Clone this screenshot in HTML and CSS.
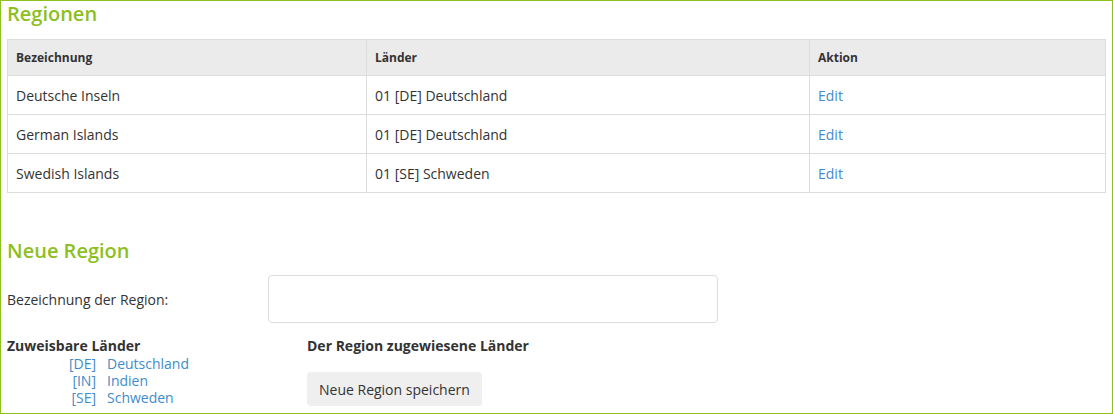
FILE: index.html
```html
<!DOCTYPE html>
<html lang="de">
<head>
<meta charset="utf-8">
<title>Regionen</title>
<link rel="stylesheet" href="styles.css">
</head>
<body>
<div class="panel">
  <h2 class="title">Regionen</h2>
  <table class="regions">
    <colgroup>
      <col class="col-name">
      <col class="col-countries">
      <col class="col-action">
    </colgroup>
    <thead>
      <tr><th>Bezeichnung</th><th>Länder</th><th>Aktion</th></tr>
    </thead>
    <tbody>
      <tr><td>Deutsche Inseln</td><td>01 [DE] Deutschland</td><td><a href="#" class="link">Edit</a></td></tr>
      <tr><td>German Islands</td><td>01 [DE] Deutschland</td><td><a href="#" class="link">Edit</a></td></tr>
      <tr><td>Swedish Islands</td><td>01 [SE] Schweden</td><td><a href="#" class="link">Edit</a></td></tr>
    </tbody>
  </table>

  <h2 class="title title-new">Neue Region</h2>
  <div class="form-row">
    <label class="form-label" for="region-name">Bezeichnung der Region:</label>
    <input class="text-input" id="region-name" type="text">
  </div>
  <div class="assign">
    <div class="assign-col assign-available">
      <h4 class="sub-title">Zuweisbare Länder</h4>
      <div class="country-list">
        <a href="#" class="link code">[DE]</a><a href="#" class="link">Deutschland</a>
        <a href="#" class="link code">[IN]</a><a href="#" class="link">Indien</a>
        <a href="#" class="link code">[SE]</a><a href="#" class="link">Schweden</a>
      </div>
    </div>
    <div class="assign-col assign-assigned">
      <h4 class="sub-title">Der Region zugewiesene Länder</h4>
      <button class="btn" type="button">Neue Region speichern</button>
    </div>
  </div>
</div>
</body>
</html>
```

FILE: styles.css
```css
html, body {
  margin: 0;
  padding: 0;
  background: #ffffff;
}

body {
  font-family: "Open Sans", "Noto Sans", "Liberation Sans", sans-serif;
  font-size: 14px;
  line-height: 20px;
  color: #333333;
}

.panel {
  box-sizing: border-box;
  width: 1113px;
  height: 414px;
  border: 1px solid #8dc11f;
  padding: 0 6px;
  overflow: hidden;
}

.title {
  margin: 2px 0 0;
  font-size: 20px;
  line-height: 22px;
  font-weight: 600;
  color: #8dbf1e;
}

.regions {
  width: 100%;
  margin-top: 14px;
  border-collapse: collapse;
  table-layout: fixed;
}

.col-name { width: 359px; }
.col-countries { width: 443px; }

.regions th,
.regions td {
  border: 1px solid #dddddd;
  text-align: left;
  vertical-align: middle;
}

.regions th {
  background: #ebebeb;
  font-size: 12px;
  line-height: 19px;
  font-weight: 700;
  padding: 8px 8px;
}

.regions td {
  padding: 10px 8px 8px;
  line-height: 20px;
}

.link {
  color: #428bca;
  text-decoration: none;
}

.title-new {
  margin-top: 47px;
}

.form-row {
  display: flex;
  align-items: center;
  margin-top: 13px;
}

.form-label {
  width: 261px;
  flex: none;
  padding-top: 2px;
}

.text-input {
  box-sizing: border-box;
  width: 450px;
  height: 48px;
  border: 1px solid #dddddd;
  border-radius: 4px;
  background: #ffffff;
  padding: 6px 12px;
  font: inherit;
}

.assign {
  display: flex;
  margin-top: 13px;
}

.assign-available {
  width: 300px;
  flex: none;
}

.sub-title {
  margin: 0;
  font-size: 14px;
  line-height: 20px;
  font-weight: 700;
}

.country-list {
  display: grid;
  grid-template-columns: 89px auto;
  column-gap: 11px;
  justify-content: start;
  line-height: 17px;
  margin-top: -1px;
}

.code {
  text-align: right;
}

.btn {
  display: block;
  box-sizing: border-box;
  margin-top: 16px;
  height: 34px;
  padding: 1px 12px 0;
  border: none;
  border-radius: 4px;
  background: #efefef;
  color: #333333;
  font: inherit;
  line-height: 20px;
}
```
